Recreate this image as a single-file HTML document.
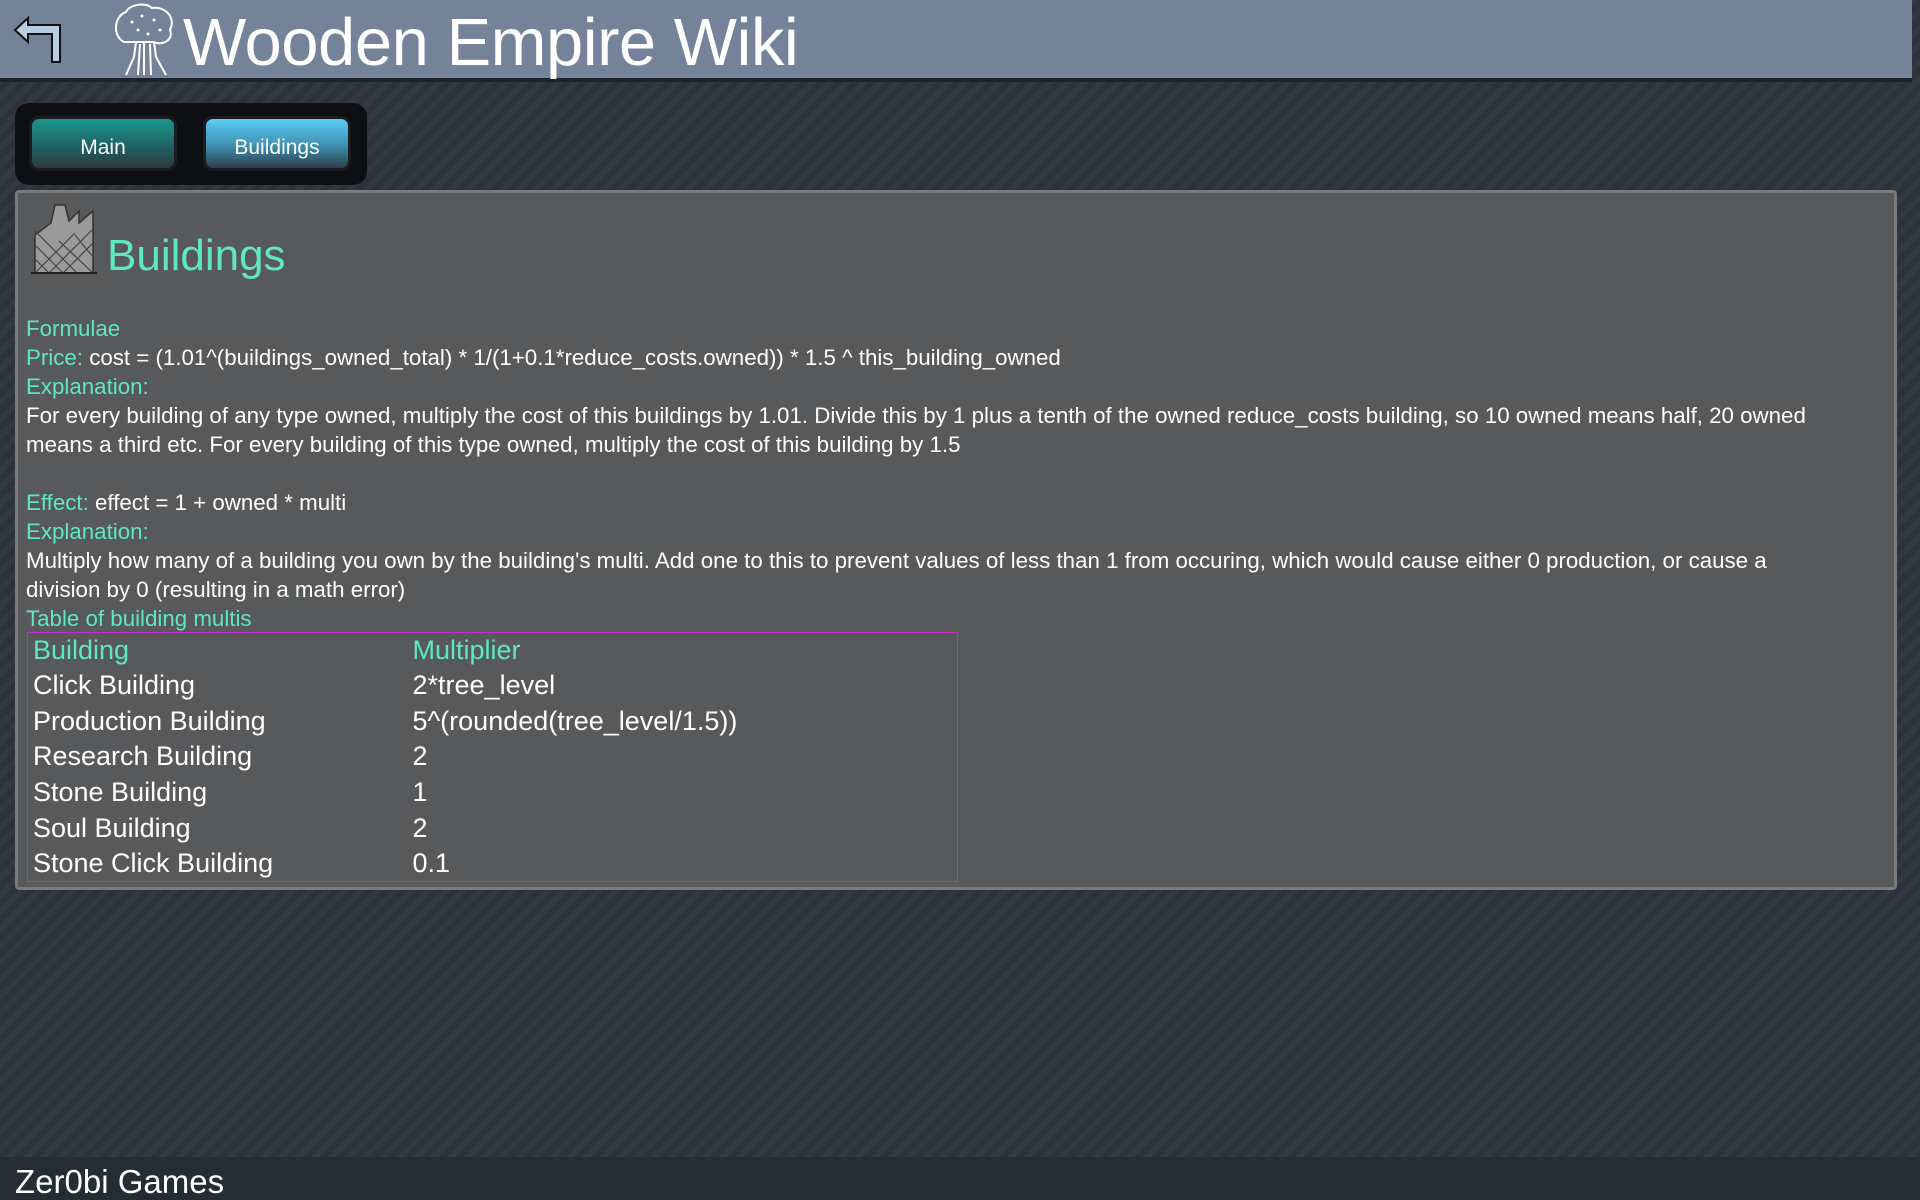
<!DOCTYPE html>
<html><head><meta charset="utf-8"><style>
*{margin:0;padding:0;box-sizing:border-box}
html,body{width:1920px;height:1200px;overflow:hidden}
body{font-family:"Liberation Sans","DejaVu Sans",sans-serif;color:#fff;position:relative;
background:#2e353d repeating-linear-gradient(135deg,#2b3239 0 6px,#323941 6px 12px);}
.hdr{position:absolute;left:0;top:0;width:1912px;height:82px;background:#748399;border-bottom:4px solid #1e2228}
.hdr .title{position:absolute;left:183px;top:4px;font-size:67px;color:#fff;white-space:nowrap;letter-spacing:-0.5px}
.nav{position:absolute;left:15px;top:103px;width:352px;height:82px;background:#0d0f12;border-radius:14px}
.btn{position:absolute;top:13px;width:148px;height:55px;border-radius:10px;border:3px solid #1a1c20;font-size:21px;text-align:center;line-height:57px;color:#fff}
.b1{left:14px;background:linear-gradient(#1a9690,#1f5e60 60%,#2d3a3e)}
.b2{left:188px;background:linear-gradient(#5ccdf5,#3f8fb0 55%,#2e3d48)}
.panel{position:absolute;left:15px;top:190px;width:1882px;height:700px;background:#58595b;border:3px solid #7a7b7d;border-radius:4px}
.h1{position:absolute;left:89px;top:38px;font-size:44px;color:#5de8c0}
.txt{position:absolute;left:8px;top:121px;width:1830px;font-size:22.3px;line-height:29px}
.g{color:#5de8c0}
table{position:absolute;left:9px;top:439px;width:931px;height:250px;border:1px solid #c22ec6;border-collapse:collapse;font-size:27px}
td{padding:0 0 0 5px;height:35px;vertical-align:middle}
td.c1{width:380px}
.foot{position:absolute;left:0;top:1157px;width:1920px;height:43px;background:#252c36;font-size:33px;padding-left:15px;line-height:50px}
</style></head><body>
<div style="position:absolute;left:838px;top:0;width:50px;height:2px;background:#3a8ee8"></div>
<div style="position:absolute;left:888px;top:0;width:192px;height:2px;background:#2a2e34"></div>
<div class="hdr">
<svg style="position:absolute;left:12px;top:14px" width="54" height="50" viewBox="0 0 54 50"><path d="M3 16 L16 4 L16 11 L48 11 L48 48 L40 48 L40 20 L16 20 L16 28 Z" fill="#b9cde0" stroke="#111" stroke-width="2"/></svg>
<svg style="position:absolute;left:110px;top:2px" width="72" height="75" viewBox="0 0 72 75"><g fill="none" stroke="#fff" stroke-width="2"><path d="M14 40 C2 34 4 14 16 10 C20 2 36 0 42 6 C56 4 66 16 60 28 C64 38 52 44 44 40 Z"/><path d="M26 40 L24 55 L16 73 M34 40 L34 73 M44 40 L46 55 L56 73 M30 42 L28 73 M40 42 L41 73"/></g><g fill="#fff"><circle cx="22" cy="20" r="1.5"/><circle cx="32" cy="14" r="1.5"/><circle cx="44" cy="18" r="1.5"/><circle cx="28" cy="28" r="1.5"/><circle cx="50" cy="28" r="1.5"/><circle cx="38" cy="32" r="1.5"/></g></svg>
<div class="title">Wooden Empire Wiki</div>
</div>
<div class="nav"><div class="btn b1">Main</div><div class="btn b2">Buildings</div></div>
<div class="panel">
<svg style="position:absolute;left:11px;top:8px" width="70" height="75" viewBox="0 0 70 75"><path d="M6 34 L22 22 L26 4 L36 4 L40 20 L50 10 L50 22 L64 10 L64 72 L6 72 Z" fill="#9a9a9a" stroke="#333" stroke-width="1.5"/><path d="M6 44 L34 72 M6 58 L20 72 M6 72 L46 32 M20 72 L64 28 M34 72 L64 42 M30 40 L64 72 M46 34 L64 56 M6 30 L48 72" stroke="#444" stroke-width="1.2"/><path d="M2 72 L68 72" stroke="#222" stroke-width="2"/></svg>
<div class="h1">Buildings</div>
<div class="txt">
<div class="g">Formulae</div>
<div><span class="g">Price:</span> cost = (1.01^(buildings_owned_total) * 1/(1+0.1*reduce_costs.owned)) * 1.5 ^ this_building_owned</div>
<div class="g">Explanation:</div>
<div>For every building of any type owned, multiply the cost of this buildings by 1.01. Divide this by 1 plus a tenth of the owned reduce_costs building, so 10 owned means half, 20 owned means a third etc. For every building of this type owned, multiply the cost of this building by 1.5</div>
<div>&nbsp;</div>
<div><span class="g">Effect:</span> effect = 1 + owned * multi</div>
<div class="g">Explanation:</div>
<div>Multiply how many of a building you own by the building's multi. Add one to this to prevent values of less than 1 from occuring, which would cause either 0 production, or cause a<br>division by 0 (resulting in a math error)</div>
<div class="g">Table of building multis</div>
</div>
<table>
<tr class="g"><td class="c1">Building</td><td>Multiplier</td></tr>
<tr><td class="c1">Click Building</td><td>2*tree_level</td></tr>
<tr><td class="c1">Production Building</td><td>5^(rounded(tree_level/1.5))</td></tr>
<tr><td class="c1">Research Building</td><td>2</td></tr>
<tr><td class="c1">Stone Building</td><td>1</td></tr>
<tr><td class="c1">Soul Building</td><td>2</td></tr>
<tr><td class="c1">Stone Click Building</td><td>0.1</td></tr>
</table>
</div>
<div class="foot">Zer0bi Games</div>
</body></html>
